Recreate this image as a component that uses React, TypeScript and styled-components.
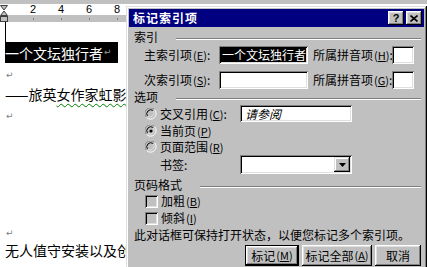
import React from "react";
import styled, { createGlobalStyle } from "styled-components";

const GlobalStyle = createGlobalStyle`
  html, body { margin: 0; padding: 0; }
  body {
    width: 427px; height: 267px; overflow: hidden; background: #fff;
    font-family: "Noto Sans CJK SC", "Liberation Sans", sans-serif;
  }
`;

const Screen = styled.div`
  position: relative;
  width: 427px;
  height: 267px;
  overflow: hidden;
  display: flex;
  flex-direction: column;
  background: #fff;
`;

const TopStrip = styled.div`
  height: 4px;
  background: #c0c0c0;
  flex: none;
`;

const RulerRow = styled.div`
  display: flex;
  height: 18px;
  flex: none;
`;

const IndentMarker = styled.div`
  width: 8px;
  flex: none;
  background: #fff;
`;

const Ruler = styled.div`
  flex: 1;
  display: flex;
  flex-direction: column;
`;

const RulerNumbers = styled.div`
  height: 11px;
  background: #fff;
  display: flex;
  padding-left: 11px;
  font-family: "Liberation Sans", sans-serif;
  font-size: 11px;
  line-height: 11px;
  color: #000;
`;

const RulerTicks = styled.div`
  height: 7px;
  background: #c0c0c0;
  display: flex;
  padding-left: 11px;
`;

const RulerCell = styled.div`
  width: 28px;
  display: flex;
  justify-content: center;
  align-items: center;
`;

const Tick = styled.div`
  width: 1px;
  height: 2px;
  background: #808080;
`;

const Doc = styled.div`
  flex: 1;
  display: flex;
  flex-direction: column;
  font-size: 14px;
  color: #000;
  width: 126px;
  overflow: hidden;
`;

const Line = styled.div<{ $h: number; $top?: number }>`
  height: ${(p) => p.$h}px;
  margin-top: ${(p) => p.$top ?? 0}px;
  display: flex;
  align-items: center;
  white-space: nowrap;
  line-height: 1;
  padding-left: 5px;
`;

const Selected = styled.span`
  background: #000;
  color: #fff;
  display: inline-flex;
  align-items: center;
  height: 21px;
  padding-right: 6px;
`;

const Mark = styled.span<{ $dark?: boolean }>`
  font-family: "DejaVu Sans", sans-serif;
  font-size: 9px;
  color: ${(p) => (p.$dark ? "#999" : "#808080")};
  margin-left: 1px;
`;

const Wavy = styled.span`
  text-decoration: underline wavy #008000;
  text-decoration-thickness: 1px;
  text-underline-offset: 3px;
`;

const CursorBar = styled.div`
  width: 1px;
  height: 20px;
  background: #000;
  margin-left: 5px;
`;

/* ---------- dialog ---------- */

const Dialog = styled.div`
  position: absolute;
  left: 126px;
  top: 6px;
  width: 301px;
  height: 275px;
  box-sizing: border-box;
  padding: 3px;
  background: #c0c0c0;
  box-shadow: inset -1px -1px #000, inset 1px 1px #dfdfdf,
    inset -2px -2px #808080, inset 2px 2px #fff;
  font-size: 12px;
  color: #000;
  line-height: 1;
`;

const TitleBar = styled.div`
  height: 18px;
  background: #000080;
  display: flex;
  align-items: center;
  padding: 0 2px 0 4px;
  color: #fff;
  font-weight: bold;
  font-size: 12px;
`;

const TitleText = styled.div`
  flex: 1;
  letter-spacing: 1px;
`;

const TitleButtons = styled.div`
  display: flex;
  gap: 2px;
`;

const TitleBtn = styled.div`
  width: 16px;
  height: 14px;
  box-sizing: border-box;
  background: #c0c0c0;
  box-shadow: inset -1px -1px #000, inset 1px 1px #fff,
    inset -2px -2px #808080, inset 2px 2px #dfdfdf;
  display: flex;
  align-items: center;
  justify-content: center;
  color: #000;
  font-family: "Liberation Sans", sans-serif;
  font-weight: bold;
  font-size: 11px;
`;

const Body = styled.div`
  padding: 0 3px 0 5px;
  display: flex;
  flex-direction: column;
`;

const GroupHeader = styled.div<{ $top: number }>`
  margin-top: ${(p) => p.$top}px;
  height: 14px;
  display: flex;
  align-items: center;
`;

const GroupLine = styled.div`
  flex: 1;
  height: 1px;
  background: #808080;
  border-bottom: 1px solid #fff;
  margin: 4px 0 0 18px;
`;

const Row = styled.div<{ $top?: number; $h: number; $indent?: number }>`
  margin-top: ${(p) => p.$top ?? 0}px;
  height: ${(p) => p.$h}px;
  display: flex;
  align-items: center;
  padding-left: ${(p) => p.$indent ?? 10}px;
  white-space: nowrap;
`;

const Label = styled.div<{ $w?: number }>`
  width: ${(p) => (p.$w ? `${p.$w}px` : "auto")};
  flex: none;
  display: flex;
  align-items: center;
`;

const Field = styled.div<{ $w: number; $h?: number }>`
  width: ${(p) => p.$w}px;
  height: ${(p) => p.$h ?? 18}px;
  flex: none;
  box-sizing: border-box;
  background: #fff;
  box-shadow: inset 1px 1px #808080, inset -1px -1px #fff,
    inset 2px 2px #000, inset -2px -2px #dfdfdf;
  padding: 2px 2px 2px 2px;
  display: flex;
  align-items: center;
  overflow: hidden;
`;

const FieldSelection = styled.div`
  flex: 1;
  align-self: stretch;
  background: #000;
  color: #fff;
  display: flex;
  align-items: center;
  padding-left: 1px;
  white-space: nowrap;
  overflow: hidden;
`;

const ItalicText = styled.span`
  font-style: italic;
  padding-left: 3px;
`;

const DropButton = styled.div`
  margin-left: auto;
  width: 16px;
  align-self: stretch;
  box-sizing: border-box;
  background: #c0c0c0;
  box-shadow: inset -1px -1px #000, inset 1px 1px #dfdfdf,
    inset -2px -2px #808080, inset 2px 2px #fff;
  display: flex;
  align-items: center;
  justify-content: center;
`;

const Access = styled.span`
  font-size: 11px;
  letter-spacing: 0;
  margin-left: 1px;
`;

const ControlText = styled.span`
  margin-left: 3px;
`;

const Note = styled.div`
  margin-top: 1px;
  height: 16px;
  display: flex;
  align-items: center;
  white-space: nowrap;
`;

const ButtonRow = styled.div`
  margin-top: 2px;
  display: flex;
  justify-content: flex-end;
  gap: 3px;
  padding-right: 0px;
`;

const Button = styled.div<{ $w: number; $default?: boolean }>`
  width: ${(p) => p.$w}px;
  height: 21px;
  box-sizing: border-box;
  background: #c0c0c0;
  box-shadow: ${(p) =>
    p.$default
      ? "inset -1px -1px #000, inset 1px 1px #000, inset -2px -2px #000, inset 2px 2px #fff, inset -3px -3px #808080, inset 3px 3px #dfdfdf"
      : "inset -1px -1px #000, inset 1px 1px #fff, inset -2px -2px #808080, inset 2px 2px #dfdfdf"};
  display: flex;
  align-items: center;
  justify-content: center;
  white-space: nowrap;
`;

const Radio = ({ checked }: { checked?: boolean }) => (
  <svg width="12" height="12" viewBox="0 0 12 12" style={{ flex: "none" }}>
    <path d="M1.5 9.5 A5 5 0 0 1 9.5 1.5" fill="none" stroke="#808080" strokeWidth="1" />
    <path d="M9.5 1.5 A5 5 0 0 1 1.5 9.5" fill="none" stroke="#fff" strokeWidth="1" />
    <circle cx="6" cy="6" r="4" fill="#c0c0c0" />
    <path d="M2.6 8.2 A4 4 0 0 1 8.2 2.6" fill="none" stroke="#000" strokeWidth="1" />
    <path d="M8.2 2.6 A4 4 0 0 1 2.6 8.2" fill="none" stroke="#dfdfdf" strokeWidth="1" />
    {checked && <circle cx="6" cy="6" r="1.6" fill="#000" />}
  </svg>
);

const CheckBox = styled.div`
  width: 13px;
  height: 13px;
  flex: none;
  box-sizing: border-box;
  background: #c0c0c0;
  box-shadow: inset 1px 1px #808080, inset -1px -1px #fff,
    inset 2px 2px #000, inset -2px -2px #dfdfdf;
`;

const U = ({ c }: { c: string }) => (
  <Access>
    (<u>{c}</u>)
  </Access>
);

export default function App() {
  return (
    <>
      <GlobalStyle />
      <Screen>
        <TopStrip />
        <RulerRow>
          <IndentMarker>
            <svg width="8" height="18" viewBox="0 0 8 18">
              <path d="M0.5 0.5 H7.5 L4 5 Z" fill="#c0c0c0" stroke="#404040" />
              <path d="M4 6 L7.5 10.5 H0.5 Z" fill="#c0c0c0" stroke="#404040" />
              <rect x="0.5" y="11.5" width="7" height="5" fill="#c0c0c0" stroke="#404040" />
            </svg>
          </IndentMarker>
          <Ruler>
            <RulerNumbers>
              {["2", "4", "6", "8"].map((n) => (
                <RulerCell key={n}>{n}</RulerCell>
              ))}
            </RulerNumbers>
            <RulerTicks>
              {[0, 1, 2, 3].map((n) => (
                <RulerCell key={n}>
                  <Tick />
                </RulerCell>
              ))}
            </RulerTicks>
          </Ruler>
        </RulerRow>
        <Doc>
          <CursorBar />
          <Line $h={21} $top={0}>
            <Selected>
              一个文坛独行者<Mark $dark>↵</Mark>
            </Selected>
          </Line>
          <Line $h={14} $top={5}>
            <Mark>↵</Mark>
          </Line>
          <Line $h={16} $top={4}>
            ——旅英<Wavy>女作家虹影</Wavy>
          </Line>
          <Line $h={14} $top={7}>
            <Mark>↵</Mark>
          </Line>
          <Line $h={14} $top={103}>
            <Mark>↵</Mark>
          </Line>
          <Line $h={16} $top={2}>
            无人值守安装以及创建
          </Line>
        </Doc>

        <Dialog>
          <TitleBar>
            <TitleText>标记索引项</TitleText>
            <TitleButtons>
              <TitleBtn>?</TitleBtn>
              <TitleBtn>
                <svg width="8" height="7" viewBox="0 0 8 7">
                  <path d="M0.5 0.5 L7.5 6.5 M7.5 0.5 L0.5 6.5" stroke="#000" strokeWidth="1.6" />
                </svg>
              </TitleBtn>
            </TitleButtons>
          </TitleBar>
          <Body>
            <GroupHeader $top={3}>
              索引
              <GroupLine />
            </GroupHeader>
            <Row $top={2} $h={18}>
              <Label $w={75}>
                主索引项<U c="E" />:
              </Label>
              <Field $w={89}>
                <FieldSelection>一个文坛独行者</FieldSelection>
              </Field>
              <Label $w={84} style={{ paddingLeft: 5, boxSizing: "border-box" }}>
                所属拼音项<U c="H" />:
              </Label>
              <Field $w={22} />
            </Row>
            <Row $top={7} $h={18}>
              <Label $w={75}>
                次索引项<U c="S" />:
              </Label>
              <Field $w={89} />
              <Label $w={84} style={{ paddingLeft: 5, boxSizing: "border-box" }}>
                所属拼音项<U c="G" />:
              </Label>
              <Field $w={22} />
            </Row>
            <GroupHeader $top={1}>
              选项
              <GroupLine />
            </GroupHeader>
            <Row $top={1} $h={17} $indent={11}>
              <Label $w={95}>
                <Radio />
                <ControlText>
                  交叉引用<U c="C" />:
                </ControlText>
              </Label>
              <Field $w={112} $h={17}>
                <ItalicText>请参阅</ItalicText>
              </Field>
            </Row>
            <Row $h={17} $indent={11}>
              <Radio checked />
              <ControlText>
                当前页<U c="P" />
              </ControlText>
            </Row>
            <Row $h={16} $indent={11}>
              <Radio />
              <ControlText>
                页面范围<U c="R" />
              </ControlText>
            </Row>
            <Row $h={19} $indent={26}>
              <Label $w={80}>书签:</Label>
              <Field $w={112} $h={19}>
                <DropButton>
                  <svg width="7" height="4" viewBox="0 0 7 4">
                    <path d="M0 0 H7 L3.5 4 Z" fill="#000" />
                  </svg>
                </DropButton>
              </Field>
            </Row>
            <GroupHeader $top={4}>
              页码格式
              <GroupLine />
            </GroupHeader>
            <Row $top={1} $h={16} $indent={11}>
              <CheckBox />
              <ControlText>
                加粗<U c="B" />
              </ControlText>
            </Row>
            <Row $top={1} $h={16} $indent={11}>
              <CheckBox />
              <ControlText>
                倾斜<U c="I" />
              </ControlText>
            </Row>
            <Note>此对话框可保持打开状态，以便您标记多个索引项。</Note>
            <ButtonRow>
              <Button $w={54} $default>
                标记<U c="M" />
              </Button>
              <Button $w={70}>
                标记全部<U c="A" />
              </Button>
              <Button $w={46}>取消</Button>
            </ButtonRow>
          </Body>
        </Dialog>
      </Screen>
    </>
  );
}
